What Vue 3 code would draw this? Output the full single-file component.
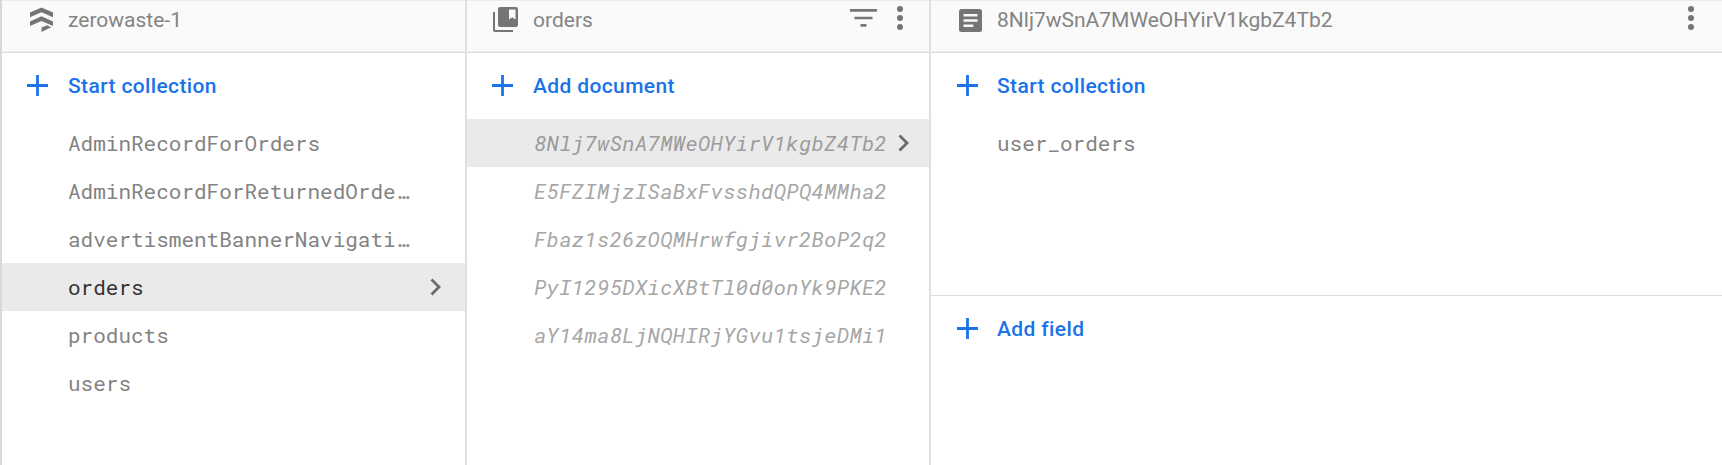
<script setup>
const collections = [
  { name: 'AdminRecordForOrders' },
  { name: 'AdminRecordForReturnedOrde…' },
  { name: 'advertismentBannerNavigati…' },
  { name: 'orders', active: true },
  { name: 'products' },
  { name: 'users' },
]
const documents = [
  { name: '8Nlj7wSnA7MWeOHYirV1kgbZ4Tb2', active: true },
  { name: 'E5FZIMjzISaBxFvsshdQPQ4MMha2' },
  { name: 'Fbaz1s26zOQMHrwfgjivr2BoP2q2' },
  { name: 'PyI1295DXicXBtTl0d0onYk9PKE2' },
  { name: 'aY14ma8LjNQHIRjYGvu1tsjeDMi1' },
]
</script>

<template>
  <div class="board">
    <section class="panel first">
      <header class="head">
        <svg class="icon firestore" viewBox="0 0 23 25">
          <path d="M0 5.600 11.500.5 23 5.600v4.600L11.500 5.200 0 10.200zM0 14.400 11.500 9.200 23 14.400v4.600l-11.500-5L0 19zM11.500 20.500l5.500-2.300 4.200 2.100-9.700 4.700z" />
        </svg>
        <span class="title">zerowaste-1</span>
      </header>
      <button class="add">
        <svg class="plus" viewBox="0 0 21 21"><path d="M9.1 0h2.8v9.1H21v2.8h-9.1V21H9.1v-9.1H0V9.1h9.1z" /></svg>
        <span>Start collection</span>
      </button>
      <ul class="list">
        <li v-for="c in collections" :key="c.name" class="row" :class="{ active: c.active }">
          <span class="name">{{ c.name }}</span>
          <svg v-if="c.active" class="chevron" viewBox="0 0 12 18"><path d="m1.500 1.500 7.500 7.500-7.500 7.500" /></svg>
        </li>
      </ul>
    </section>

    <section class="panel">
      <header class="head">
        <svg class="icon book" viewBox="0 0 25 25">
          <path d="M0 5h2v18h18v2H2a2 2 0 0 1-2-2z" />
          <path fill-rule="evenodd" d="M7.2 0h15.6A2.3 2.3 0 0 1 25 2.3v15.4a2.3 2.3 0 0 1-2.2 2.3H7.2A2.2 2.2 0 0 1 5 17.700V2.300A2.200 2.200 0 0 1 7.200 0zM16 2.500V12.500l3.200-2.300 3.300 2.300V2.500z" />
        </svg>
        <span class="title">orders</span>
        <svg class="filter" viewBox="0 0 27 18"><path d="M0 0h27v2.800H0zM4.500 7.700h18v2.600h-18zM10.500 15h6v2.800h-6z" /></svg>
        <svg class="dots" viewBox="0 0 6 24"><circle cx="3" cy="3" r="3" /><circle cx="3" cy="12" r="3" /><circle cx="3" cy="21" r="3" /></svg>
      </header>
      <button class="add">
        <svg class="plus" viewBox="0 0 21 21"><path d="M9.1 0h2.8v9.1H21v2.8h-9.1V21H9.1v-9.1H0V9.1h9.1z" /></svg>
        <span>Add document</span>
      </button>
      <ul class="list docs">
        <li v-for="d in documents" :key="d.name" class="row" :class="{ active: d.active }">
          <span class="name">{{ d.name }}</span>
          <svg v-if="d.active" class="chevron" viewBox="0 0 12 18"><path d="m1.500 1.500 7.500 7.500-7.500 7.500" /></svg>
        </li>
      </ul>
    </section>

    <section class="panel last">
      <header class="head">
        <svg class="icon doc" viewBox="0 0 23 23">
          <path fill-rule="evenodd" d="M2.500 0h18A2.500 2.500 0 0 1 23 2.500v18a2.500 2.500 0 0 1-2.500 2.500h-18A2.500 2.500 0 0 1 0 20.500v-18A2.500 2.500 0 0 1 2.500 0zM4.500 5v2.400h14V5zM4.500 10.200v2.500h14v-2.500zM4.500 15.400v2.500h9.800v-2.500z" />
        </svg>
        <span class="title">8Nlj7wSnA7MWeOHYirV1kgbZ4Tb2</span>
        <svg class="dots" viewBox="0 0 6 24"><circle cx="3" cy="3" r="3" /><circle cx="3" cy="12" r="3" /><circle cx="3" cy="21" r="3" /></svg>
      </header>
      <div class="subcollections">
        <button class="add">
          <svg class="plus" viewBox="0 0 21 21"><path d="M9.1 0h2.8v9.1H21v2.8h-9.1V21H9.1v-9.1H0V9.1h9.1z" /></svg>
          <span>Start collection</span>
        </button>
        <ul class="list">
          <li class="row"><span class="name">user_orders</span></li>
        </ul>
      </div>
      <button class="add">
        <svg class="plus" viewBox="0 0 21 21"><path d="M9.1 0h2.8v9.1H21v2.8h-9.1V21H9.1v-9.1H0V9.1h9.1z" /></svg>
        <span>Add field</span>
      </button>
    </section>
  </div>
</template>

<style>
body { margin: 0; background: #fff; overflow: hidden; }
</style>

<style scoped>
.board {
  box-sizing: border-box;
  display: grid;
  grid-template-columns: 465px 464px 1fr;
  width: 1722px;
  height: 465px;
  border-left: 2px solid #d8d8d8;
  font-family: Roboto, sans-serif;
  color: #757575;
}
.panel {
  box-sizing: border-box;
  min-width: 0;
  border-right: 2px solid #e0e0e0;
}
.last { border-right: 0; }
.head {
  box-sizing: border-box;
  display: flex;
  align-items: flex-start;
  height: 53px;
  padding: 0 26px;
  background: #fafafa;
  border-top: 1px solid #ececec;
  border-bottom: 1px solid #dcdcdc;
  box-shadow: inset 0 -1px #efefef;
  fill: #757575;
}
.icon { flex: none; }
.firestore { width: 23px; height: 25px; margin: 6px 15px 0 2px; }
.book { width: 25px; height: 25px; margin: 6px 15px 0 0; }
.doc { width: 23px; height: 23px; margin: 8px 15px 0 2px; }
.title {
  flex: 1;
  margin-top: 6px;
  color: #848484;
  font-size: 21px;
  line-height: 26px;
  white-space: nowrap;
}
.filter { width: 27px; height: 18px; margin: 8px 20px 0 0; }
.dots { width: 6px; height: 24px; margin-top: 5px; }
.last .dots { margin-right: 2px; }
.add {
  display: flex;
  align-items: center;
  gap: 20px;
  width: 100%;
  height: 66px;
  padding: 0 0 0 25px;
  border: 0;
  background: none;
  color: #1a73e8;
  fill: #1a73e8;
  font: 500 21px/26px Roboto, sans-serif;
  letter-spacing: 0.37px;
}
.plus { flex: none; width: 21px; height: 21px; margin-bottom: 1px; }
.last .add { padding-left: 26px; gap: 19px; }
.list { margin: 0; padding: 0; list-style: none; }
.row {
  box-sizing: border-box;
  display: flex;
  align-items: center;
  justify-content: space-between;
  height: 48px;
  padding: 0 23px 0 66px;
  font-family: "Roboto Mono", "Liberation Mono", monospace;
  font-size: 21px;
  font-weight: 400;
  color: #838383;
  white-space: pre;
}
.active { background: #eaeaea; }
.active .name { color: #333; }
.docs .name, .docs .active .name {
  color: #a6a6a6;
  font-style: italic;
  letter-spacing: 0.29px;
}
.docs .active .name { color: #9c9c9c; }
.chevron {
  width: 12px;
  height: 18px;
  fill: none;
  stroke: #6b6b6b;
  stroke-width: 2.8;
}
.docs .row { padding: 0 19px 0 67px; }
.subcollections {
  box-sizing: border-box;
  height: 243px;
  border-bottom: 1px solid #dedede;
}
</style>
